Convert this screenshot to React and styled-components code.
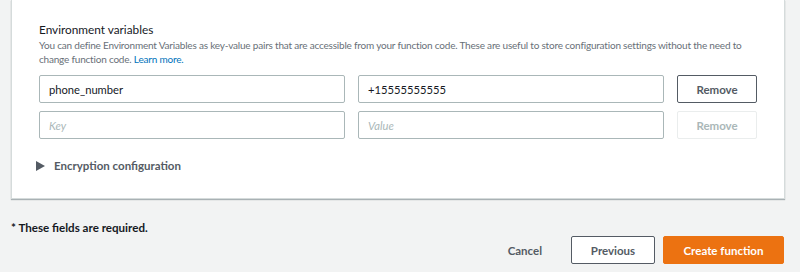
import React from "react";
import styled, { createGlobalStyle } from "styled-components";

const Global = createGlobalStyle`
  html, body {
    margin: 0;
    padding: 0;
    background: #f2f3f3;
    font-family: Lato, "Liberation Sans", sans-serif;
  }
`;

const Page = styled.div`
  width: 800px;
  height: 272px;
  padding: 0 15px 0 11px;
  box-sizing: border-box;
`;

const Card = styled.div`
  background: #fff;
  border: 1px solid #d5dbdb;
  border-top: none;
  box-shadow: 0 1px 1px 0 rgba(0, 28, 36, 0.3);
  padding: 22px 28px 20px 27px;
  height: 199px;
  box-sizing: border-box;
`;

const Title = styled.div`
  font-size: 11.8px;
  color: #16191f;
  line-height: 16px;
`;

const Desc = styled.p`
  margin: 1px 0 0;
  font-size: 10px;
  letter-spacing: -0.2px;
  line-height: 13.5px;
  color: #687078;
  white-space: nowrap;
  a {
    color: #0073bb;
    text-decoration: none;
  }
`;

const Rows = styled.div`
  display: flex;
  flex-direction: column;
  gap: 8px;
  margin-top: 9px;
`;

const Row = styled.div`
  display: grid;
  grid-template-columns: 306px 306px 80px;
  column-gap: 13px;
  align-items: center;
`;

const Field = styled.input`
  height: 28px;
  box-sizing: border-box;
  border: 1px solid #aab7b8;
  border-radius: 2px;
  padding: 0 9px;
  font-family: inherit;
  font-size: 11.2px;
  color: #16191f;
  outline: none;
  &::placeholder {
    color: #aab7b8;
    font-style: italic;
  }
`;

const Button = styled.button`
  height: 28px;
  box-sizing: border-box;
  border-radius: 2px;
  font-family: inherit;
  font-weight: 700;
  font-size: 11.5px;
  padding: 0 12px;
  background: ${(p) => (p.$primary ? "#ec7211" : p.$plain ? "transparent" : "#fff")};
  color: ${(p) => (p.$primary ? "#fff" : p.$disabled ? "#aab7b8" : "#545b64")};
  border: 1px solid
    ${(p) => (p.$primary ? "#ec7211" : p.$plain ? "transparent" : p.$disabled ? "#eaeded" : "#545b64")};
`;

const Expander = styled.div`
  display: flex;
  align-items: center;
  gap: 9px;
  margin-top: 20px;
  margin-left: -3px;
  font-size: 11.5px;
  font-weight: 700;
  color: #545b64;
`;

const Footer = styled.div`
  padding-top: 21px;
`;

const Required = styled.div`
  font-size: 11.6px;
  line-height: 16px;
  font-weight: 700;
  color: #16191f;
`;

const Actions = styled.div`
  display: flex;
  justify-content: flex-end;
  gap: 8px;
  margin-top: 0;
  margin-right: 1px;
`;

const CancelBtn = styled(Button)`
  margin-right: 8px;
`;

export default function App() {
  return (
    <Page>
      <Global />
      <Card>
        <Title>Environment variables</Title>
        <Desc>
          You can define Environment Variables as key-value pairs that are accessible from your
          function code. These are useful to store configuration settings without the need to
          <br />
          change function code. <a href="#">Learn more.</a>
        </Desc>
        <Rows>
          <Row>
            <Field defaultValue="phone_number" />
            <Field defaultValue="+15555555555" />
            <Button>Remove</Button>
          </Row>
          <Row>
            <Field placeholder="Key" />
            <Field placeholder="Value" />
            <Button $disabled>Remove</Button>
          </Row>
        </Rows>
        <Expander>
          <svg width="9" height="10" viewBox="0 0 9 10">
            <path d="M0 0 L9 5 L0 10 Z" fill="#545b64" />
          </svg>
          Encryption configuration
        </Expander>
      </Card>
      <Footer>
        <Required>* These fields are required.</Required>
        <Actions>
          <CancelBtn $plain>Cancel</CancelBtn>
          <Button style={{ width: 84 }}>Previous</Button>
          <Button $primary style={{ width: 121 }}>Create function</Button>
        </Actions>
      </Footer>
    </Page>
  );
}
